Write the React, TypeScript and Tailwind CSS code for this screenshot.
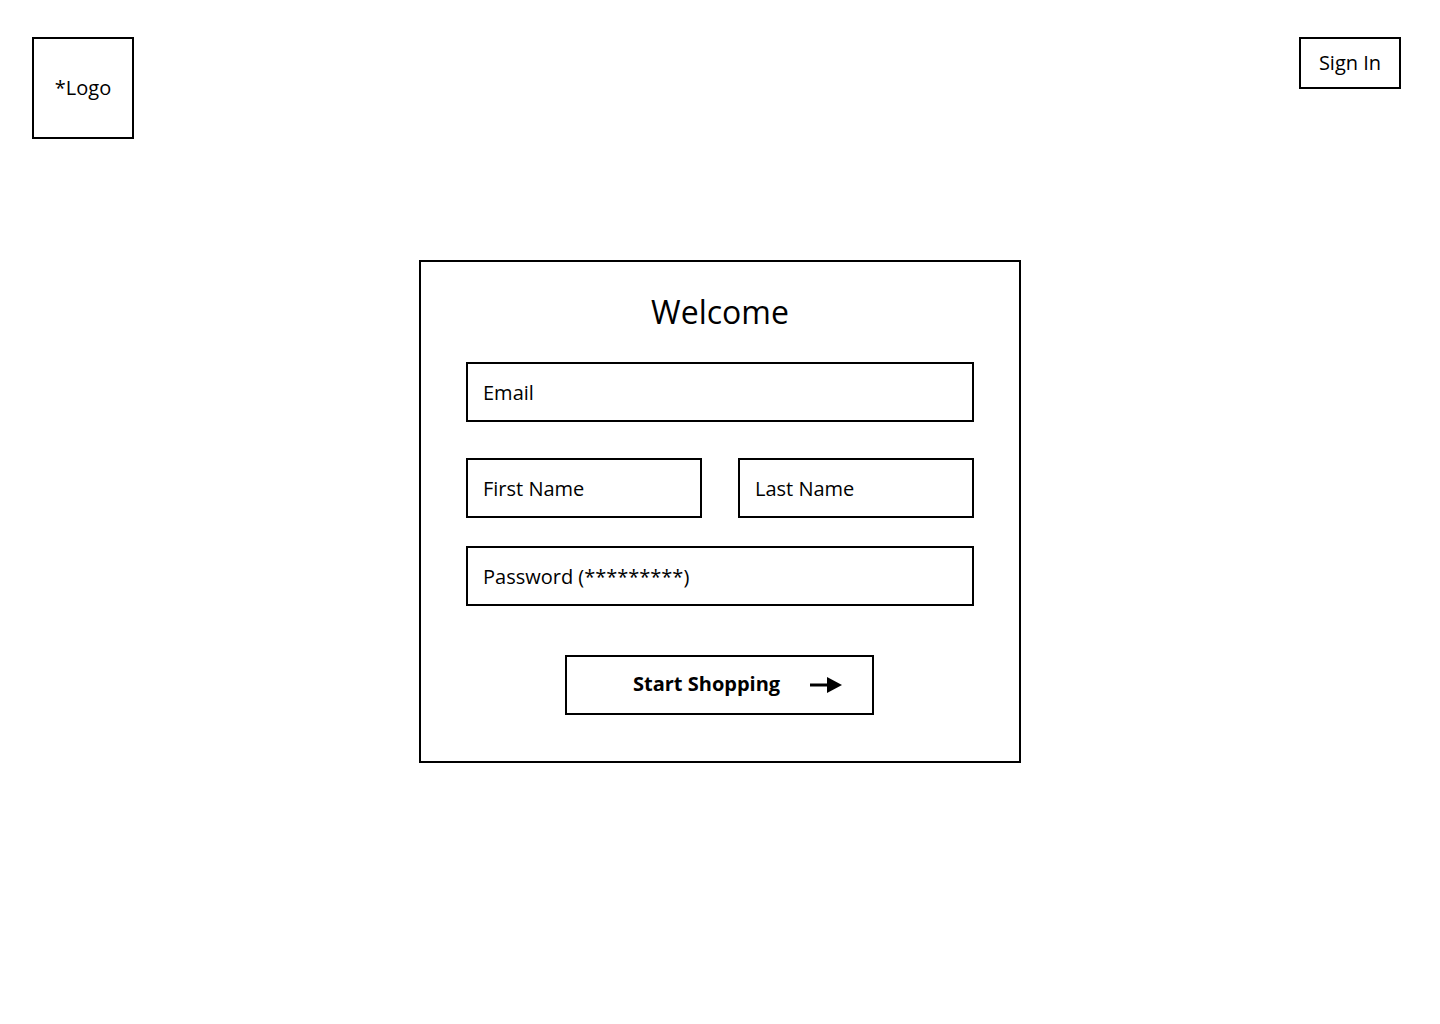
export default function App() {
  return (
    <div className="min-h-[1024px] w-full bg-white text-black" style={{ fontFamily: '"Open Sans", sans-serif' }}>
      {/* Header */}
      <header className="flex items-start justify-between pl-[32px] pr-[39px] pt-[37px]">
        <div className="flex h-[102px] w-[102px] items-center justify-center border-2 border-black text-[20px]">
          *Logo
        </div>
        <button className="flex h-[52px] w-[102px] items-center justify-center border-2 border-black text-[20px]">
          Sign In
        </button>
      </header>

      {/* Welcome card */}
      <main className="mt-[121px] flex justify-center">
        <div className="w-[602px] border-2 border-black px-[45px] pt-[28px] pb-[46px]">
          <h1 className="text-center text-[32px] leading-[44px]">Welcome</h1>

          <div className="mt-[28px] flex h-[60px] items-center border-2 border-black px-[15px] pt-[1px] text-[20px]">
            Email
          </div>

          <div className="mt-[36px] flex gap-[36px]">
            <div className="flex h-[60px] flex-1 items-center border-2 border-black px-[15px] pt-[1px] text-[20px]">
              First Name
            </div>
            <div className="flex h-[60px] flex-1 items-center border-2 border-black px-[15px] pt-[1px] text-[20px]">
              Last Name
            </div>
          </div>

          <div className="mt-[28px] flex h-[60px] items-center border-2 border-black px-[15px] pt-[1px] text-[20px]">
            Password (*********)
          </div>

          <div className="mt-[49px] flex">
            <button className="ml-[99px] flex h-[60px] w-[309px] items-center gap-[30px] border-2 border-black pb-[2px] pl-[66px] text-[20px] font-bold">
              <span>Start Shopping</span>
              <svg width="32" height="16" viewBox="0 0 32 16" fill="none" className="mt-[2px]">
                <line x1="0" y1="8" x2="18" y2="8" stroke="black" strokeWidth={3} />
                <polygon points="17,0 32,8 17,16" fill="black" />
              </svg>
            </button>
          </div>
        </div>
      </main>
    </div>
  )
}
